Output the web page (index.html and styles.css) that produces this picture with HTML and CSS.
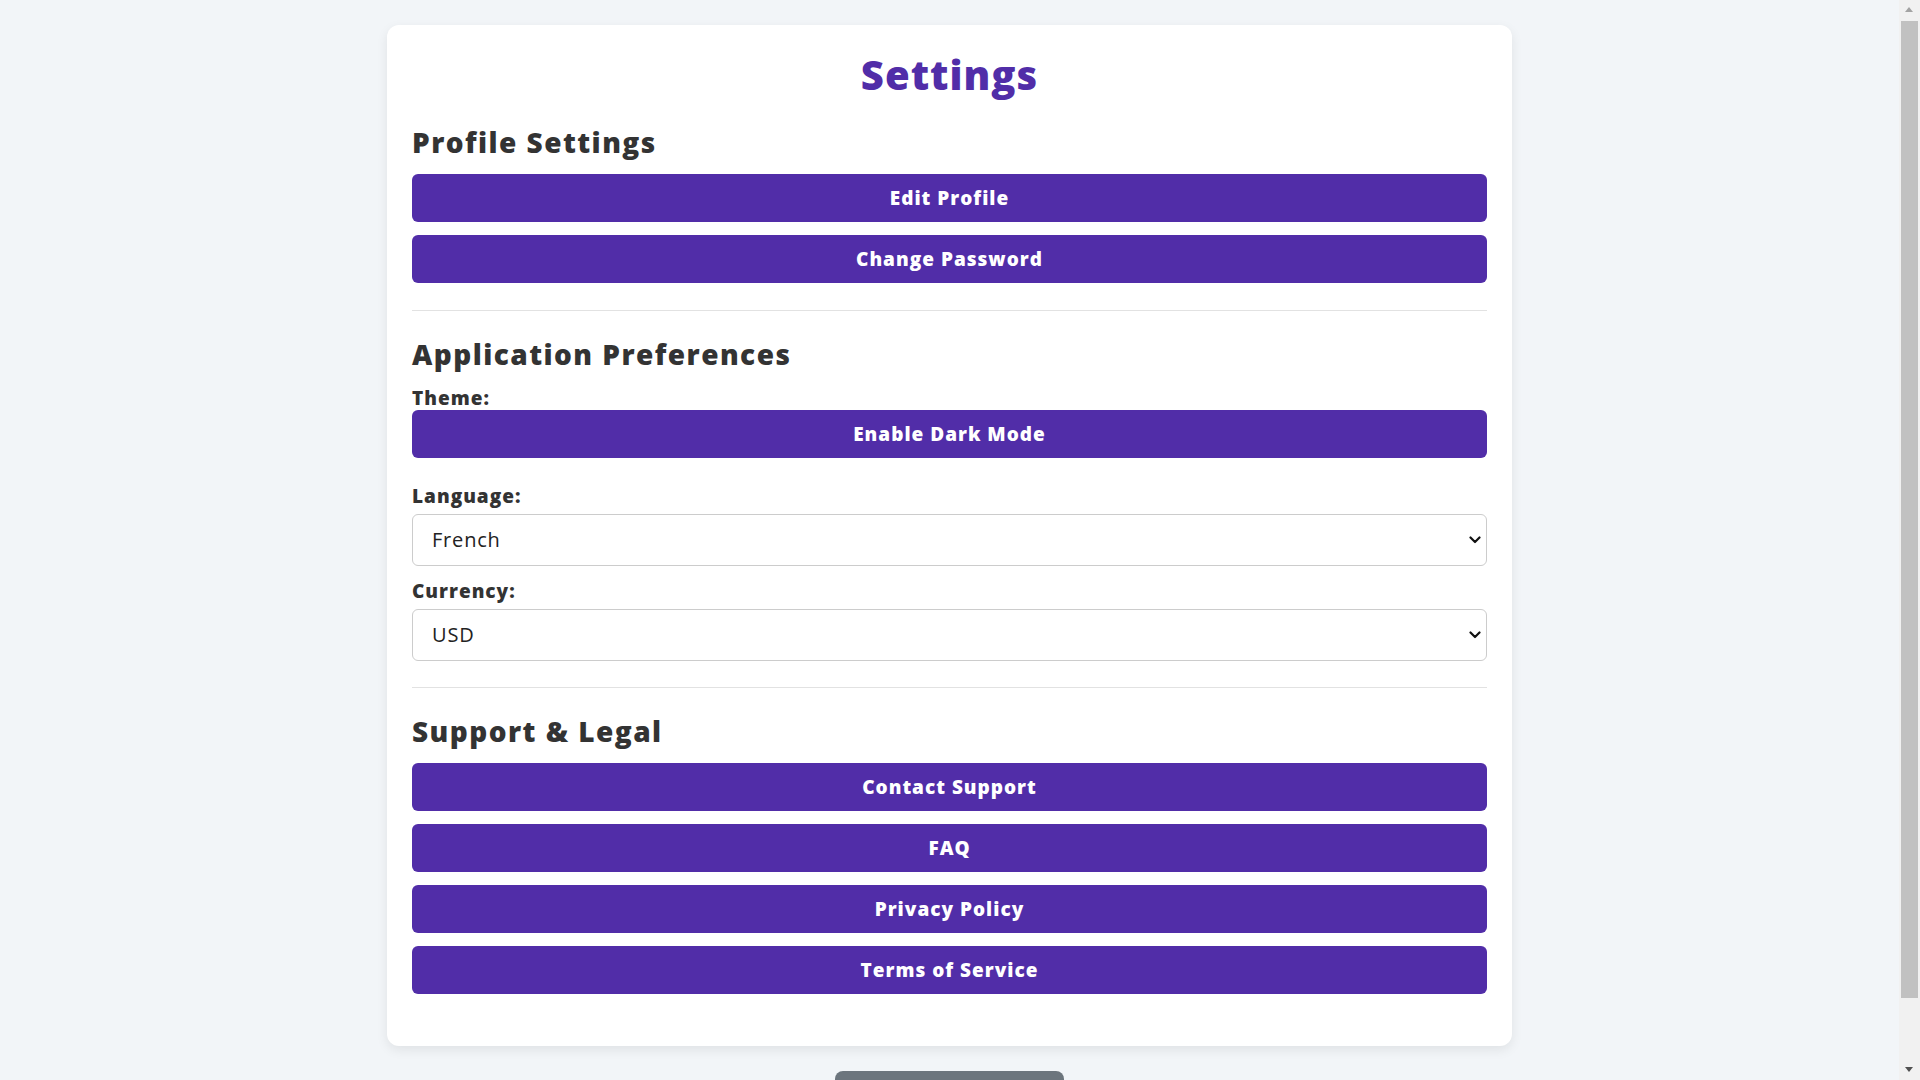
FILE: index.html
```html
<!DOCTYPE html>
<html lang="en">
<head>
<meta charset="utf-8">
<title>Settings</title>
<link rel="stylesheet" href="styles.css">
</head>
<body>
<main class="card">
  <h1 class="title">Settings</h1>

  <section class="section">
    <h2 class="section-title">Profile Settings</h2>
    <button class="btn">Edit Profile</button>
    <button class="btn">Change Password</button>
  </section>

  <section class="section">
    <h2 class="section-title">Application Preferences</h2>
    <div class="field field-theme">
      <label class="label">Theme:</label>
      <button class="btn">Enable Dark Mode</button>
    </div>
    <div class="field">
      <label class="label label-gap" for="language">Language:</label>
      <div class="select-wrap">
        <select class="select" id="language">
          <option>English</option>
          <option selected>French</option>
          <option>Spanish</option>
        </select>
        <svg class="chevron" viewBox="0 0 12 8" width="12" height="8" aria-hidden="true"><path d="M1.5 1.5 L6 6 L10.5 1.5" fill="none" stroke="#111" stroke-width="2.2" stroke-linecap="round" stroke-linejoin="round"/></svg>
      </div>
    </div>
    <div class="field field-last">
      <label class="label label-gap" for="currency">Currency:</label>
      <div class="select-wrap">
        <select class="select" id="currency">
          <option selected>USD</option>
          <option>EUR</option>
          <option>GBP</option>
        </select>
        <svg class="chevron" viewBox="0 0 12 8" width="12" height="8" aria-hidden="true"><path d="M1.5 1.5 L6 6 L10.5 1.5" fill="none" stroke="#111" stroke-width="2.2" stroke-linecap="round" stroke-linejoin="round"/></svg>
      </div>
    </div>
  </section>

  <section class="section section-last">
    <h2 class="section-title">Support &amp; Legal</h2>
    <button class="btn">Contact Support</button>
    <button class="btn">FAQ</button>
    <button class="btn">Privacy Policy</button>
    <button class="btn">Terms of Service</button>
  </section>
</main>
<div class="footer">
  <button class="btn-secondary">Log Out</button>
</div>
<div class="scrollbar" aria-hidden="true">
  <span class="sb-arrow sb-up"></span>
  <span class="sb-thumb"></span>
  <span class="sb-arrow sb-down"></span>
</div>
</body>
</html>
```

FILE: styles.css
```css
* { box-sizing: border-box; }

html, body {
  margin: 0;
  padding: 0;
}

body {
  background: #f2f5f8;
  font-family: "Open Sans", "Liberation Sans", sans-serif;
  color: #333333;
  padding: 25px 21px 37px 0;
}

.card {
  width: 1125px;
  margin: 0 auto;
  background: #ffffff;
  border-radius: 12px;
  box-shadow: 0 4px 12px rgba(0, 0, 0, 0.08);
  padding: 26px 25px 25px;
}

.title {
  margin: 0 0 26px;
  font-size: 40px;
  line-height: 48px;
  font-weight: 800;
  letter-spacing: 1px;
  text-align: center;
  color: #512da8;
}

.section {
  padding-bottom: 13px;
  border-bottom: 1px solid #e2e2e2;
  margin-bottom: 26px;
}

.section-last {
  border-bottom: none;
  margin-bottom: 0;
}

.section-title {
  margin: 0 0 15px;
  font-size: 28px;
  line-height: 34px;
  font-weight: 800;
  letter-spacing: 1.45px;
  color: #333333;
}

.btn {
  display: block;
  width: 100%;
  height: 48px;
  margin: 0 0 13.3px;
  border: none;
  border-radius: 6px;
  background: #512da8;
  color: #ffffff;
  font-family: inherit;
  font-size: 19px;
  font-weight: 800;
  letter-spacing: 1px;
  cursor: pointer;
}

.field-theme .btn { margin-bottom: 13px; }

.field { display: flex; flex-direction: column; }

.field-last { margin-bottom: 13px; }

.label {
  display: block;
  font-size: 19px;
  line-height: 24px;
  font-weight: 800;
  letter-spacing: 1px;
  color: #333333;
}

.label-gap {
  margin-top: 13px;
  margin-bottom: 6px;
}

.select-wrap {
  position: relative;
}

.select {
  display: block;
  width: 100%;
  height: 52px;
  padding: 0 40px 0 19px;
  border: 1px solid #cccccc;
  border-radius: 6px;
  background: #ffffff;
  color: #222222;
  font-family: "Open Sans", "Liberation Sans", sans-serif;
  font-size: 20px;
  letter-spacing: 0.8px;
  appearance: none;
  -webkit-appearance: none;
}

.chevron {
  position: absolute;
  right: 6px;
  top: 50%;
  margin-top: -4px;
  pointer-events: none;
}

.footer {
  display: flex;
  justify-content: center;
  margin-top: 25px;
}

.btn-secondary {
  width: 229px;
  height: 48px;
  padding: 18px 0 0;
  border: none;
  border-radius: 8px;
  background: #6c757d;
  color: #ffffff;
  font-family: inherit;
  font-size: 18px;
  font-weight: 700;
}

.scrollbar {
  position: fixed;
  top: 0;
  right: 0;
  width: 21px;
  height: 100vh;
  background: #f1f1f1;
}

.sb-thumb {
  position: absolute;
  left: 2px;
  right: 2px;
  top: 21px;
  height: 977px;
  background: #c1c1c1;
}

.sb-arrow {
  position: absolute;
  left: 6px;
  width: 0;
  height: 0;
  border-left: 4.5px solid transparent;
  border-right: 4.5px solid transparent;
}

.sb-up {
  top: 7px;
  border-bottom: 5px solid #a3a3a3;
}

.sb-down {
  bottom: 8px;
  border-top: 5px solid #505050;
}
```
